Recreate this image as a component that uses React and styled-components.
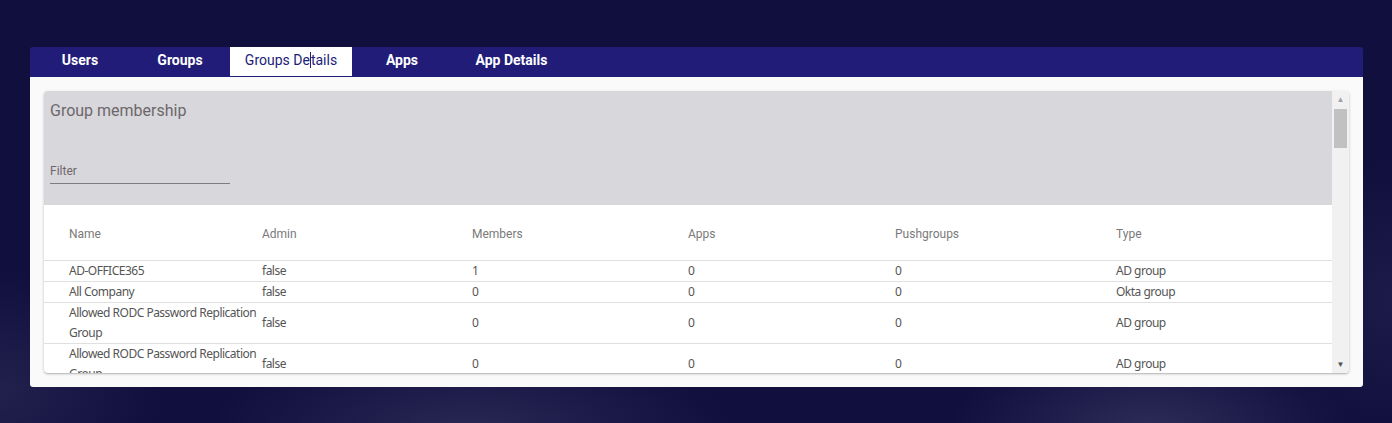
import React from "react";
import styled, { createGlobalStyle } from "styled-components";

const GlobalStyle = createGlobalStyle`
  html, body {
    margin: 0;
    padding: 0;
  }
  body {
    width: 1392px;
    height: 423px;
    overflow: hidden;
    font-family: Roboto, "Liberation Sans", Arial, sans-serif;
    background-color: #110f3e;
    background-image:
      radial-gradient(ellipse 260px 90px at 470px 430px, rgba(60, 58, 100, 0.55), transparent),
      radial-gradient(ellipse 200px 90px at 1150px 430px, rgba(64, 62, 104, 0.6), transparent),
      radial-gradient(ellipse 160px 120px at 0px 390px, rgba(50, 48, 90, 0.5), transparent),
      radial-gradient(ellipse 120px 140px at 1392px 300px, rgba(40, 38, 84, 0.5), transparent);
  }
`;

const Page = styled("div")`
  padding: 47px 29px 0 30px;
`;

const Panel = styled("div")`
  width: 1333px;
  height: 340px;
  border-radius: 3px;
  overflow: hidden;
  display: flex;
  flex-direction: column;
`;

const TabBar = styled("div")`
  display: flex;
  height: 30px;
  background: #211c78;
`;

const Tab = styled("div")`
  width: ${(p) => p.$w || 100}px;
  height: ${(p) => (p.$active ? 29 : 30)}px;
  box-sizing: border-box;
  padding-bottom: ${(p) => (p.$active ? 3 : 4)}px;
  display: flex;
  align-items: center;
  justify-content: center;
  font-size: 14px;
  font-weight: ${(p) => (p.$active ? 400 : 700)};
  color: ${(p) => (p.$active ? "#221d78" : "#ffffff")};
  background: ${(p) => (p.$active ? "#ffffff" : "transparent")};
  cursor: pointer;
`;

const Caret = styled("span")`
  display: inline-block;
  width: 1px;
  height: 16px;
  margin: 0 0 -3px 0;
  background: #221d78;
`;

const Content = styled("div")`
  flex: 1;
  background: #fafafa;
  padding: 14px;
`;

const Card = styled("div")`
  height: 282px;
  display: flex;
  border-radius: 4px;
  background: #ffffff;
  box-shadow: 0 1px 3px rgba(0, 0, 0, 0.22), 0 1px 1px rgba(0, 0, 0, 0.1);
  overflow: hidden;
`;

const Scroller = styled("div")`
  flex: 1;
  overflow: hidden;
`;

const Header = styled("div")`
  height: 114px;
  background: #d8d7dc;
  padding: 10px 6px 0 6px;
  box-sizing: border-box;
`;

const Title = styled("div")`
  font-size: 16px;
  color: #6d676b;
  line-height: 20px;
`;

const FilterField = styled("label")`
  display: block;
  width: 180px;
  margin-top: 42px;
  border-bottom: 1px solid #807c80;
  font-size: 12px;
  color: #6d676b;
  line-height: 16px;
  padding-bottom: 4px;
`;

const Grid = styled("div")`
  display: grid;
  grid-template-columns: 218px 210px 216px 207px 221px 1fr;
`;

const HeadCell = styled("div")`
  height: 56px;
  box-sizing: border-box;
  padding-top: 2px;
  display: flex;
  align-items: center;
  padding-left: ${(p) => (p.$first ? 25 : 0)}px;
  border-bottom: 1px solid #e0e0e0;
  font-size: 12px;
  color: #7a7a7a;
`;

const Cell = styled("div")`
  display: flex;
  align-items: center;
  padding: 0 ${(p) => (p.$first ? 4 : 0)}px 0 ${(p) => (p.$first ? 25 : 0)}px;
  min-height: 20px;
  border-bottom: 1px solid #e0e0e0;
  font-family: "Noto Sans", "Open Sans", sans-serif;
  font-size: 12px;
  letter-spacing: -0.5px;
  line-height: 20px;
  color: #555555;
`;

const Scrollbar = styled("div")`
  width: 17px;
  background: #f1f1f1;
  display: flex;
  flex-direction: column;
  align-items: center;
`;

const Arrow = styled("div")`
  height: 17px;
  width: 17px;
  display: flex;
  align-items: center;
  justify-content: center;
  color: ${(p) => (p.$dark ? "#505050" : "#a3a3a3")};
  font-size: 8px;
`;

const Thumb = styled("div")`
  width: 13px;
  height: 39px;
  margin-top: 1px;
  background: #c1c1c1;
`;

const Spacer = styled("div")`
  flex: 1;
`;

const tabs = [
  { label: "Users" },
  { label: "Groups" },
  { label: "Groups Details", active: true, w: 122 },
  { label: "Apps" },
  { label: "App Details", w: 119 },
];

const columns = ["Name", "Admin", "Members", "Apps", "Pushgroups", "Type"];

const rows = [
  ["AD-OFFICE365", "false", "1", "0", "0", "AD group"],
  ["All Company", "false", "0", "0", "0", "Okta group"],
  ["Allowed RODC Password Replication Group", "false", "0", "0", "0", "AD group"],
  ["Allowed RODC Password Replication Group", "false", "0", "0", "0", "AD group"],
];

const App = () => {
  return (
    <>
      <GlobalStyle />
      <Page>
        <Panel>
          <TabBar>
            {tabs.map((t) => (
              <Tab key={t.label} $active={t.active} $w={t.w}>
                {t.active ? (
                  <span>
                    Groups De
                    <Caret />
                    tails
                  </span>
                ) : (
                  t.label
                )}
              </Tab>
            ))}
          </TabBar>
          <Content>
            <Card>
              <Scroller>
                <Header>
                  <Title>Group membership</Title>
                  <FilterField>Filter</FilterField>
                </Header>
                <Grid>
                  {columns.map((c, i) => (
                    <HeadCell key={c} $first={i === 0}>
                      {c}
                    </HeadCell>
                  ))}
                  {rows.map((r, ri) =>
                    r.map((v, i) => (
                      <Cell key={ri + "-" + i} $first={i === 0}>
                        {v}
                      </Cell>
                    ))
                  )}
                </Grid>
              </Scroller>
              <Scrollbar>
                <Arrow>▲</Arrow>
                <Thumb />
                <Spacer />
                <Arrow $dark>▼</Arrow>
              </Scrollbar>
            </Card>
          </Content>
        </Panel>
      </Page>
    </>
  );
};

export default App;
